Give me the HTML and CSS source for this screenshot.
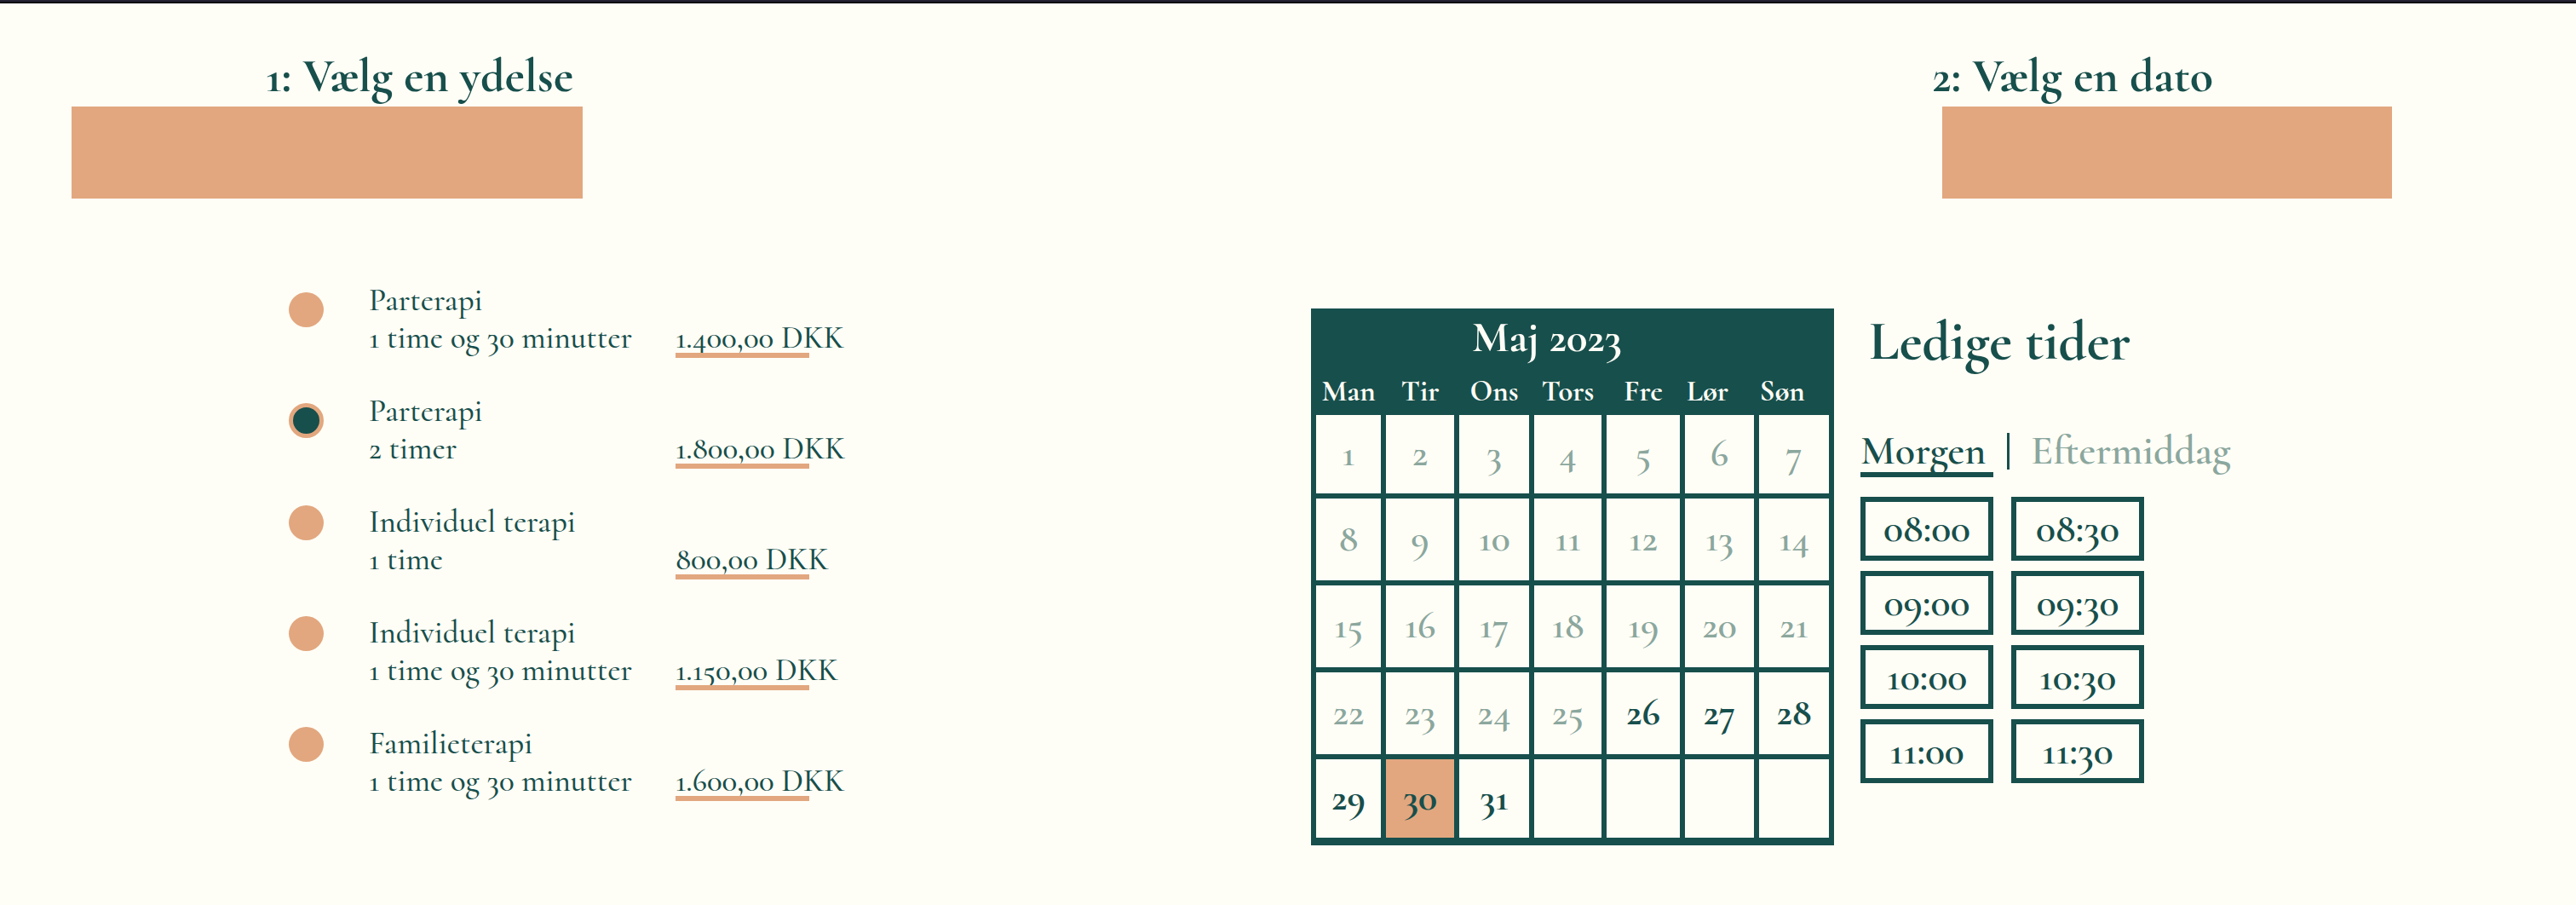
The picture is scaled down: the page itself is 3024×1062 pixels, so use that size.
FILE: index.html
```html
<!DOCTYPE html>
<html lang="da">
<head>
<meta charset="utf-8">
<meta name="viewport" content="width=device-width, initial-scale=1">
<title>Book tid</title>
<link rel="stylesheet" href="styles.css">
</head>
<body>
<div class="topbar"></div>
<main class="booking">
  <section class="step">
    <h1 class="step-title step-title--service">1: Vælg en ydelse</h1>
    <div class="banner banner--service"></div>
    <div class="services" role="radiogroup" aria-label="Ydelse">
      <label class="service service--couple">
        <input class="radio" type="radio" name="service">
        <span class="service-text">Parterapi<br>1 time og 30 minutter</span>
        <span class="price">1.400,00 DKK</span>
      </label>
      <label class="service service--couple">
        <input class="radio" type="radio" name="service" checked>
        <span class="service-text">Parterapi<br>2 timer</span>
        <span class="price">1.800,00 DKK</span>
      </label>
      <label class="service">
        <input class="radio" type="radio" name="service">
        <span class="service-text">Individuel terapi<br>1 time</span>
        <span class="price">800,00 DKK</span>
      </label>
      <label class="service">
        <input class="radio" type="radio" name="service">
        <span class="service-text">Individuel terapi<br>1 time og 30 minutter</span>
        <span class="price">1.150,00 DKK</span>
      </label>
      <label class="service">
        <input class="radio" type="radio" name="service">
        <span class="service-text">Familieterapi<br>1 time og 30 minutter</span>
        <span class="price">1.600,00 DKK</span>
      </label>
    </div>
  </section>

  <section class="step">
    <h1 class="step-title step-title--date">2: Vælg en dato</h1>
    <div class="banner banner--date"></div>
    <div class="schedule">
      <table class="calendar">
        <caption>Maj 2023</caption>
        <colgroup>
          <col class="col-mon"><col class="col-tue"><col class="col-wed"><col class="col-thu"><col class="col-fri"><col class="col-sat"><col class="col-sun">
        </colgroup>
        <thead>
          <tr><th scope="col">Man</th><th scope="col">Tir</th><th scope="col">Ons</th><th scope="col">Tors</th><th scope="col">Fre</th><th scope="col" class="weekend">Lør</th><th scope="col" class="weekend">Søn</th></tr>
        </thead>
        <tbody>
          <tr class="week-edge"><td><button class="day" disabled>1</button></td><td><button class="day" disabled>2</button></td><td><button class="day" disabled>3</button></td><td><button class="day" disabled>4</button></td><td><button class="day" disabled>5</button></td><td><button class="day" disabled>6</button></td><td><button class="day" disabled>7</button></td></tr>
          <tr><td><button class="day" disabled>8</button></td><td><button class="day" disabled>9</button></td><td><button class="day" disabled>10</button></td><td><button class="day" disabled>11</button></td><td><button class="day" disabled>12</button></td><td><button class="day" disabled>13</button></td><td><button class="day" disabled>14</button></td></tr>
          <tr><td><button class="day" disabled>15</button></td><td><button class="day" disabled>16</button></td><td><button class="day" disabled>17</button></td><td><button class="day" disabled>18</button></td><td><button class="day" disabled>19</button></td><td><button class="day" disabled>20</button></td><td><button class="day" disabled>21</button></td></tr>
          <tr><td><button class="day" disabled>22</button></td><td><button class="day" disabled>23</button></td><td><button class="day" disabled>24</button></td><td><button class="day" disabled>25</button></td><td><button class="day">26</button></td><td><button class="day">27</button></td><td><button class="day">28</button></td></tr>
          <tr class="week-edge"><td><button class="day">29</button></td><td class="selected"><button class="day" aria-pressed="true">30</button></td><td><button class="day">31</button></td><td></td><td></td><td></td><td></td></tr>
        </tbody>
      </table>

      <div class="times">
        <h2 class="times-title">Ledige tider</h2>
        <div class="tabs">
          <button class="tab tab--active">Morgen</button>
          <span class="tab-divider"></span>
          <button class="tab">Eftermiddag</button>
        </div>
        <div class="slots">
          <button class="slot">08:00</button>
          <button class="slot">08:30</button>
          <button class="slot">09:00</button>
          <button class="slot">09:30</button>
          <button class="slot">10:00</button>
          <button class="slot">10:30</button>
          <button class="slot">11:00</button>
          <button class="slot">11:30</button>
        </div>
      </div>
    </div>
  </section>
</main>
</body>
</html>
```
FILE: styles.css
```css
:root {
  --paper: #fffef6;
  --green: #174f4c;
  --muted: #8ba79e;
  --peach: #e2a77f;
}

* {
  box-sizing: border-box;
}

body {
  margin: 0;
  background: var(--paper);
  color: var(--green);
  font-family: "Cormorant", "Cormorant Garamond", "Liberation Serif", serif;
}

button {
  margin: 0;
  padding: 0;
  border: 0;
  background: none;
  color: inherit;
  font: inherit;
  cursor: pointer;
}

.topbar {
  height: 4px;
  background: #06060f;
  border-top: 2px solid #252233;
}

.booking {
  display: grid;
  grid-template-columns: 1fr 1fr;
}

.step {
  padding: 57px 0 60px;
}

.step-title {
  margin: 0 0 8px;
  font-size: 56px;
  line-height: 56px;
  font-weight: 700;
}

.step-title--service {
  padding-left: 312px;
}

.step-title--date {
  padding-left: 50%;
}

.banner {
  height: 108px;
  background: var(--peach);
}

.banner--service {
  width: 600px;
  margin-left: 84px;
}

.banner--date {
  width: 528px;
  margin-left: 768px;
}

/* Step 1: services */

.services {
  display: grid;
  gap: 42px;
  margin-top: 98px;
  padding-left: 339px;
}

.service {
  display: grid;
  grid-template-columns: 94px 360px auto;
  justify-content: start;
  font-size: 37px;
  line-height: 44px;
  font-weight: 500;
}

.radio {
  appearance: none;
  width: 41px;
  height: 41px;
  margin: 2px 0 0;
  border-radius: 50%;
  background: var(--peach);
}

.service--couple .radio {
  margin-top: 12px;
}

.radio:checked {
  border: 5px solid var(--peach);
  background: var(--green);
}

.price {
  position: relative;
  align-self: end;
}

.price::after {
  content: "";
  position: absolute;
  left: 0;
  bottom: -1px;
  width: 157px;
  height: 6px;
  background: var(--peach);
}

/* Step 2: calendar */

.schedule {
  display: flex;
  align-items: flex-start;
  gap: 31px;
  margin-top: 129px;
  padding-left: 27px;
}

.calendar {
  flex: none;
  border-spacing: 6px;
  border-bottom: 3px solid var(--green);
  background: var(--green);
}

.calendar caption {
  padding-right: 60px;
  background: var(--green);
  color: var(--paper);
  font-size: 51px;
  line-height: 68px;
  padding-bottom: 2px;
  font-weight: 700;
}

.calendar th {
  height: 43px;
  padding: 0;
  color: var(--paper);
  font-size: 35px;
  line-height: 43px;
  font-weight: 700;
}

.calendar th.weekend {
  padding-right: 28px;
}

.calendar td {
  height: 96px;
  padding: 0;
  background: var(--paper);
}

.calendar .week-edge td {
  height: 92px;
}

.calendar td.selected {
  background: var(--peach);
}

.col-mon { width: 76px; }
.col-tue { width: 80px; }
.col-wed { width: 82px; }
.col-thu { width: 79px; }
.col-fri { width: 86px; }
.col-sat { width: 81px; }
.col-sun { width: 82px; }

.day {
  display: block;
  width: 100%;
  padding-bottom: 4px;
  font-size: 46px;
  line-height: 84px;
  font-weight: 700;
}

.day:disabled {
  color: var(--muted);
  font-weight: 600;
  cursor: default;
}

/* Step 2: free times */

.times-title {
  margin: 3px 0 67px 10px;
  font-size: 65px;
  line-height: 72px;
  font-weight: 700;
}

.tabs {
  display: flex;
  align-items: flex-start;
  margin-bottom: 23px;
  font-size: 48px;
  line-height: 50px;
  font-weight: 600;
}

.tab {
  border-bottom: 6px solid transparent;
  color: var(--muted);
}

.tab--active {
  width: 156px;
  border-color: var(--green);
  color: var(--green);
  text-align: left;
}

.tab-divider {
  width: 3px;
  height: 43px;
  margin: 4px 25px 0 16px;
  background: var(--green);
}

.slots {
  display: grid;
  grid-template-columns: 156px 156px;
  gap: 12px 21px;
}

.slot {
  height: 75px;
  border: 6px solid var(--green);
  font-size: 48px;
  line-height: 63px;
  font-weight: 600;
}
```
